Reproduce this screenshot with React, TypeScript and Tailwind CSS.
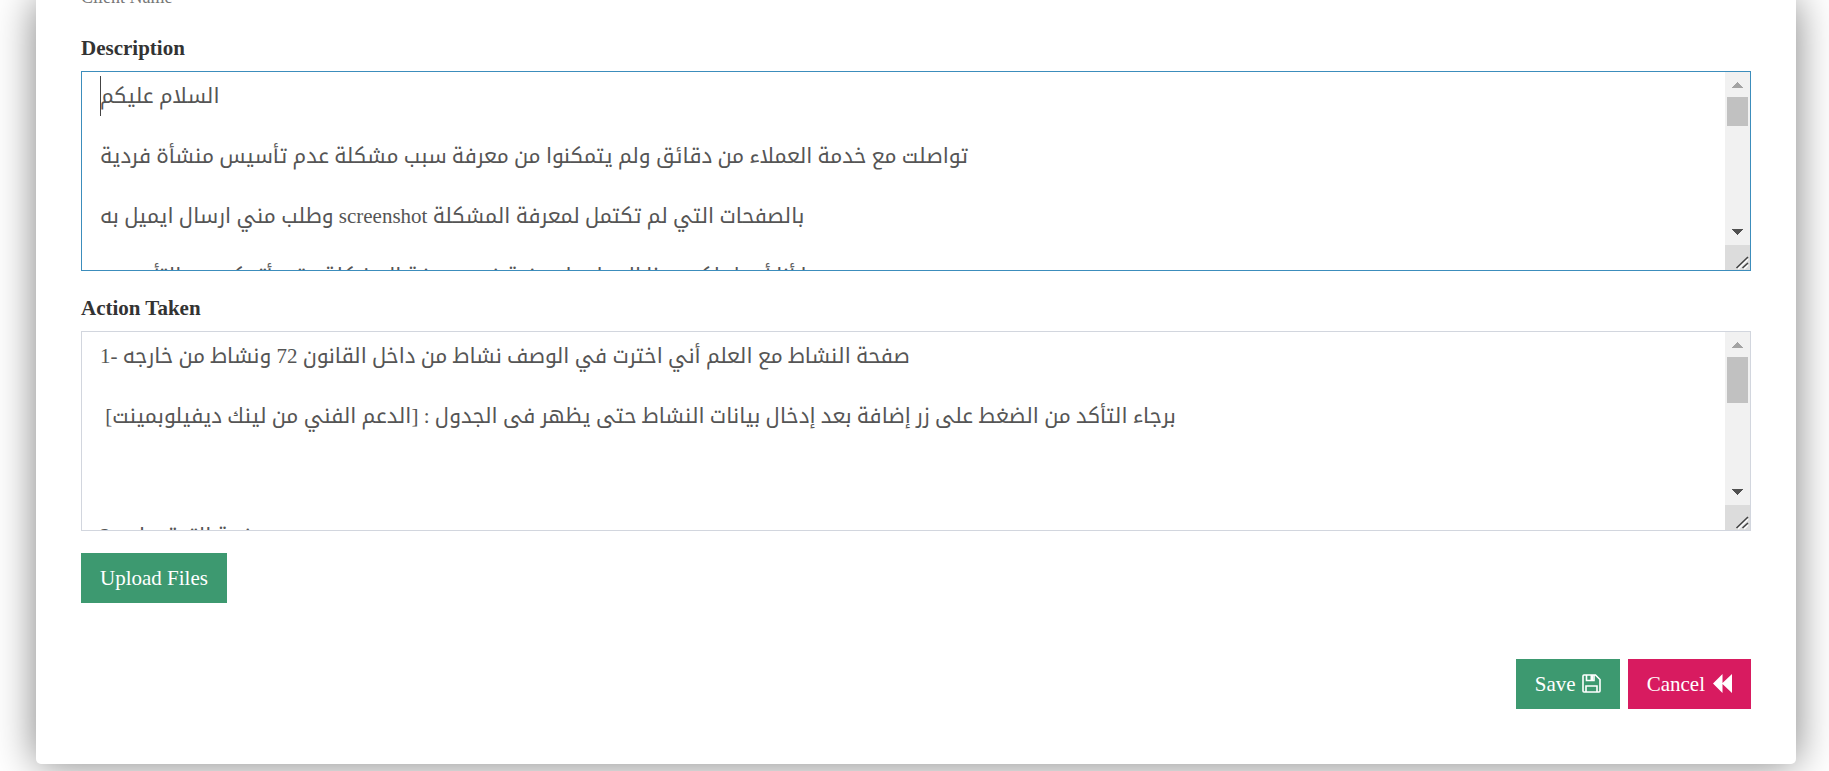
import React from "react";

function Scrollbar({ thumb }: { thumb: string }) {
  return (
    <div aria-hidden="true" className="flex w-[25px] shrink-0 flex-col bg-[#f1f1f1]">
      <svg className="h-[25px] w-[25px] shrink-0" viewBox="0 0 25 25" shapeRendering="crispEdges">
        <path d="M7 16h11l-5.5-6z" fill="#a3a3a3" />
      </svg>
      <div className={"mx-0.5 bg-[#c1c1c1] " + thumb} />
      <div className="grow" />
      <svg className="h-[25px] w-[25px] shrink-0" viewBox="0 0 25 25" shapeRendering="crispEdges">
        <path d="M7 9h11l-5.5 6z" fill="#505050" />
      </svg>
      <svg className="h-[25px] w-[25px] shrink-0 bg-[#dcdcdc]" viewBox="0 0 25 25">
        <path d="M13 24L23 14M19 24L23 20" stroke="#fff" strokeWidth="1.500" />
        <path d="M11.500 23L23 12M17.500 23L23 18" stroke="#444" strokeWidth="1.600" />
      </svg>
    </div>
  );
}

function Field(props: { id: string; label: string; border: string; thumb: string; text: string; caret?: boolean }) {
  return (
    <div className="mt-5">
      <label htmlFor={props.id} className="block text-[21px] leading-[34px] font-bold text-[#333]">
        {props.label}
      </label>
      <div className={"relative mt-1.5 flex h-[200px] border bg-white " + props.border}>
        <textarea
          id={props.id}
          dir="ltr"
          className="min-w-0 grow resize-none overflow-hidden px-[18px] py-[9px] text-[21px] leading-[30px] text-[#555] outline-none"
          defaultValue={props.text}
        />
        <Scrollbar thumb={props.thumb} />
        {props.caret && <div className="absolute top-1 left-[18px] h-10 w-px bg-[#444]" />}
      </div>
    </div>
  );
}

const description = [
  "السلام عليكم",
  "تواصلت مع خدمة العملاء من دقائق ولم يتمكنوا من معرفة سبب مشكلة عدم تأسيس منشأة فردية",
  "وطلب مني ارسال ايميل به screenshot بالصفحات التي لم تكتمل لمعرفة المشكلة",
  "وها أنا أرسل لكم هذا المعلومات رغبة في معرفة المشكلة حتى أتمكن من التأسيس",
].join("\n\n");

const action = [
  "1- صفحة النشاط مع العلم أني اخترت في الوصف نشاط من داخل القانون 72 ونشاط من خارجه",
  " برجاء التأكد من الضغط على زر إضافة بعد إدخال بيانات النشاط حتى يظهر فى الجدول : [الدعم الفني من لينك ديفيلوبمينت]",
  "",
  "2- صفحة التوقيعات",
].join("\n\n");

export default function App() {
  return (
    <div className="overflow-hidden bg-white pr-[33px] pb-[7px] pl-9 font-['Liberation_Serif','Noto_Kufi_Arabic',serif]">
      <main className="rounded-b-[5px] bg-white px-[45px] pb-[55px] shadow-[0_0_42px_rgba(0,0,0,0.5)]">
        <div className="flex h-[11px] items-end overflow-hidden">
          <span className="text-[18px] leading-[28px] text-[#777]">Client Name</span>
        </div>
        <Field id="description" label="Description" border="border-[#3c8dbc]" thumb="h-[29px]" text={description} caret />
        <Field id="action" label="Action Taken" border="border-[#d2d6de]" thumb="h-[46px]" text={action} />
        <button type="button" className="mt-[22px] h-[50px] bg-[#3d9970] px-[19px] pt-0.5 text-[21px] text-white">
          Upload Files
        </button>
        <div className="mt-14 flex justify-end gap-2">
          <button type="button" className="flex h-[50px] items-center gap-1.5 bg-[#3d9970] px-[19px] pt-0.5 text-[21px] text-white">
            Save
            <svg className="mb-1" width="19" height="19" viewBox="0 0 19 19" fill="none" stroke="#fff" strokeWidth="1.600">
              <path d="M1 2q0-1 1-1H13.500L18 5.500V17q0 1-1 1H2q-1 0-1-1z" />
              <path d="M4 18V12H15V18M4.500 1V6.500H12V1" />
              <path d="M8.500 1h2.500v5h-2.500z" fill="#fff" stroke="none" />
            </svg>
          </button>
          <button type="button" className="flex h-[50px] items-center gap-2 bg-[#d81b60] px-[19px] pt-0.5 text-[21px] text-white">
            Cancel
            <svg className="mb-1" width="19" height="19" viewBox="0 0 19 19" fill="#fff">
              <path d="M0 9.500L9.500 0V9L19 0V19L9.500 10V19z" />
            </svg>
          </button>
        </div>
      </main>
    </div>
  );
}
